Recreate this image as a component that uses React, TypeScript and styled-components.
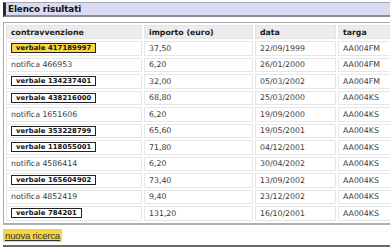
import React from "react";
import styled, { createGlobalStyle } from "styled-components";

const Global = createGlobalStyle`
  * { box-sizing: border-box; }
  html, body { margin: 0; padding: 0; background: #fff; overflow: hidden; }
  body { font-family: "DejaVu Sans", Verdana, sans-serif; }
`;

const Page = styled.div`
  width: 390px;
  overflow: hidden;
  padding: 2px 0 0 3px;
`;

const Inner = styled.div`
  width: 412px;
`;

const TitleBar = styled.div`
  height: 15px;
  background: #dadaf0;
  border-top: 1px solid #a8a8b8;
  border-bottom: 2px solid #8a8a98;
  border-left: 3px solid #2a2a2a;
  padding-left: 2px;
  display: flex;
  align-items: center;
`;

const Title = styled.h1`
  margin: 0;
  font-size: 8.8px;
  font-weight: bold;
  color: #111;
  letter-spacing: -0.1px;
`;

const Table = styled.table`
  margin-top: 5px;
  border-collapse: separate;
  border-spacing: 2px;
  border: 1px solid #a8a8a8;
  border-bottom: 2px solid #b0b0b0;
  table-layout: fixed;
  width: 412px;
`;

const Th = styled.th<{ $w?: number }>`
  ${(p) => (p.$w ? `width: ${p.$w}px;` : "")}
  height: 14px;
  background: #ececec;
  border: 1px solid #e4e4e4;
  text-align: left;
  font-size: 7.8px;
  font-weight: bold;
  color: #1a1a1a;
  padding: 0 4px;
  white-space: nowrap;
`;

const Td = styled.td`
  height: 14.5px;
  background: #fff;
  border: 1px solid #e6e6e6;
  font-size: 7.8px;
  color: #3a3a3a;
  padding: 0 4px;
  white-space: nowrap;
`;

const Badge = styled.span<{ $hi?: boolean }>`
  display: inline-block;
  height: 10px;
  line-height: 8px;
  padding: 0 4px;
  border: 1px solid #222;
  background: ${(p) => (p.$hi ? "#f8d844" : "#fff")};
  font-size: 6.8px;
  font-weight: bold;
  color: #111;
  letter-spacing: 0.1px;
  vertical-align: middle;
`;

const Footer = styled.div`
  display: flex;
  margin-top: 4px;
`;

const NewSearch = styled.a`
  display: block;
  height: 13px;
  line-height: 13px;
  padding: 0 2px;
  background: #f5d445;
  font-family: "Liberation Sans", Arial, sans-serif;
  font-size: 9.6px;
  color: #333;
  text-decoration: underline;
  letter-spacing: -0.2px;
`;

const BottomRule = styled.div`
  margin-top: 3px;
  height: 2px;
  background: #6a6a6a;
`;

type Row = { id: string; verbale: boolean; hi?: boolean; amount: string; date: string; plate: string };

const rows: Row[] = [
  { id: "417189997", verbale: true, hi: true, amount: "37,50", date: "22/09/1999", plate: "AA004FM" },
  { id: "466953", verbale: false, amount: "6,20", date: "26/01/2000", plate: "AA004FM" },
  { id: "134237401", verbale: true, amount: "32,00", date: "05/03/2002", plate: "AA004FM" },
  { id: "438216000", verbale: true, amount: "68,80", date: "25/03/2000", plate: "AA004KS" },
  { id: "1651606", verbale: false, amount: "6,20", date: "19/09/2000", plate: "AA004KS" },
  { id: "353228799", verbale: true, amount: "65,60", date: "19/05/2001", plate: "AA004KS" },
  { id: "118055001", verbale: true, amount: "71,80", date: "04/12/2001", plate: "AA004KS" },
  { id: "4586414", verbale: false, amount: "6,20", date: "30/04/2002", plate: "AA004KS" },
  { id: "165604902", verbale: true, amount: "73,40", date: "13/09/2002", plate: "AA004KS" },
  { id: "4852419", verbale: false, amount: "9,40", date: "23/12/2002", plate: "AA004KS" },
  { id: "784201", verbale: true, amount: "131,20", date: "16/10/2001", plate: "AA004KS" },
];

export default function App() {
  return (
    <Page>
      <Global />
      <Inner>
        <TitleBar>
          <Title>Elenco risultati</Title>
        </TitleBar>
        <Table>
          <thead>
            <tr>
              <Th $w={136}>contravvenzione</Th>
              <Th $w={109}>importo (euro)</Th>
              <Th $w={81}>data</Th>
              <Th>targa</Th>
            </tr>
          </thead>
          <tbody>
            {rows.map((r) => (
              <tr key={r.id}>
                <Td>
                  {r.verbale ? <Badge $hi={r.hi}>verbale {r.id}</Badge> : `notifica ${r.id}`}
                </Td>
                <Td>{r.amount}</Td>
                <Td>{r.date}</Td>
                <Td>{r.plate}</Td>
              </tr>
            ))}
          </tbody>
        </Table>
        <Footer>
          <NewSearch href="#">nuova ricerca</NewSearch>
        </Footer>
        <BottomRule />
      </Inner>
    </Page>
  );
}
